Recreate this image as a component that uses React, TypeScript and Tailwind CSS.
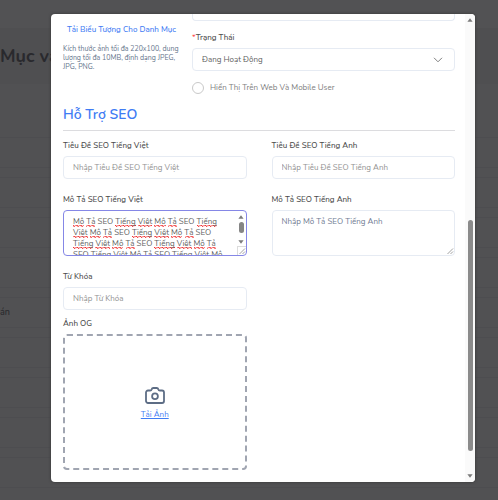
import { ReactNode, useId } from "react";

const SEO_TEXT = Array(7).fill("Mô Tả SEO Tiếng Việt").join(" ") + " Mô";

const fieldBox =
  "block w-full rounded-[4px] border border-[#e6ebf3] bg-white px-[9px] text-[8px] leading-[11px] text-[#5f5f5f] outline-none";

const squiggle =
  "bg-[linear-gradient(45deg,transparent_65%,#f02020_80%,transparent_90%),linear-gradient(135deg,transparent_5%,#f02020_15%,transparent_25%),linear-gradient(135deg,transparent_45%,#f02020_55%,transparent_65%),linear-gradient(45deg,transparent_25%,#f02020_35%,transparent_50%)] bg-[length:4px_2px] bg-bottom bg-repeat-x";

function Label({ htmlFor, children }: { htmlFor?: string; children: ReactNode }) {
  return (
    <label htmlFor={htmlFor} className="block text-[8px] leading-[12px] font-medium text-[#4c4c4c]">
      {children}
    </label>
  );
}

function TextField({ label, placeholder }: { label: string; placeholder: string }) {
  const id = useId();
  return (
    <div>
      <Label htmlFor={id}>{label}</Label>
      <input id={id} placeholder={placeholder} className={`${fieldBox} mt-1 h-[23px] placeholder:text-[#929292]`} />
    </div>
  );
}

function Grip() {
  return (
    <svg viewBox="0 0 8 8" className="size-2" stroke="#8a8a8a" strokeWidth="0.8" aria-hidden="true">
      <path d="M1.5 7 7 1.5M4.5 7 7 4.5" />
    </svg>
  );
}

function Arrow({ down = false }: { down?: boolean }) {
  return (
    <svg viewBox="0 0 6 4" className={down ? "h-1 w-1.5 rotate-180" : "h-1 w-1.5"} fill="#7b7b7b" aria-hidden="true">
      <path d="M3 0.3 5.6 3.7H.4z" />
    </svg>
  );
}

function MarkedText({ text }: { text: string }) {
  return (
    <>
      {text.split(" ").map((word, i) => (
        <span key={i}>
          <span className={word === "SEO" ? "" : squiggle}>{word}</span>{" "}
        </span>
      ))}
    </>
  );
}

function Backdrop() {
  return (
    <div className="absolute inset-0 overflow-hidden bg-[#515153]" aria-hidden="true">
      <div className="h-7 bg-[#525254]" />
      <div className="flex h-14 items-center bg-[#4f4f51] text-[18px] font-bold whitespace-nowrap text-[#29292d]">Mục và</div>
      <div className="mt-[53px] flex flex-col gap-[9px]">
        {["", "", "", "", "án", "", "", "", ""].map((text, row) => (
          <div key={row} className="flex h-[31px] items-center border-y border-[#4d4d50] text-[9px] font-medium text-[#29292d]">
            {text}
          </div>
        ))}
      </div>
    </div>
  );
}

export default function App() {
  return (
    <div className="relative h-screen overflow-hidden font-['Nunito','Lato','Noto_Sans',sans-serif]">
      <Backdrop />
      <main className="relative flex h-full w-full pt-[14px] pr-[23px] pb-[18px] pl-[51px]">
        <section role="dialog" aria-label="Danh Mục" className="flex w-full overflow-hidden rounded-[4px] bg-white shadow-[0_0_3px_#333]">
          <form className="min-w-0 flex-1 pr-[10px] pl-3">
            <div className="flex gap-3">
              <div className="w-[117px] shrink-0 pt-[9px]">
                <button type="button" className="block w-full text-center text-[8px] leading-[14px] font-medium whitespace-nowrap text-[#3f7cf4]">
                  Tải Biểu Tượng Cho Danh Mục
                </button>
                <p className="mt-[7px] text-[7px] leading-[9px] text-[#64748b]">
                  Kích thước ảnh tối đa 220x100, dung lượng tối đa 10MB, định dạng JPEG, JPG, PNG.
                </p>
              </div>
              <div className="min-w-0 flex-1">
                <input aria-label="Tên" className="block h-[7px] w-full rounded-b-[4px] border border-t-0 border-[#e6ebf3]" />
                <div className="mt-[11px]">
                  <Label htmlFor="status">
                    <span className="text-[#ff3b3b]">*</span>Trạng Thái
                  </Label>
                </div>
                <div className="relative mt-1">
                  <select id="status" className={`${fieldBox} h-[23px] appearance-none`}>
                    <option>Đang Hoạt Động</option>
                  </select>
                  <svg viewBox="0 0 10 6" className="pointer-events-none absolute top-[9px] right-3 h-1.5 w-[10px]" fill="none" stroke="#7f7f7f" aria-hidden="true">
                    <path d="M1 .8 5 4.8 9 .8" />
                  </svg>
                </div>
                <label className="mt-[11px] flex items-center gap-[6px] text-[8px] leading-[12px] text-[#808080]">
                  <input type="checkbox" className="size-3 appearance-none rounded-full border border-[#c9c9c9]" />
                  Hiển Thị Trên Web Và Mobile User
                </label>
              </div>
            </div>

            <h2 className="mt-[11px] border-b border-[#dcdcdf] pb-[5px] text-[14px] leading-[20px] font-semibold text-[#3f7cf4]">Hỗ Trợ SEO</h2>

            <div className="mt-[9px] grid grid-cols-2 gap-x-[25px] gap-y-[15px]">
              <TextField label="Tiêu Đề SEO Tiếng Việt" placeholder="Nhập Tiêu Đề SEO Tiếng Việt" />
              <TextField label="Tiêu Đề SEO Tiếng Anh" placeholder="Nhập Tiêu Đề SEO Tiếng Anh" />
              <div>
                <Label htmlFor="desc-vi">Mô Tả SEO Tiếng Việt</Label>
                <div className="relative mt-1 h-[46px] overflow-hidden rounded-[4px] border border-[#8587e6] bg-white">
                  <div className="absolute inset-0 overflow-hidden py-[5px] pr-5 pl-[9px] text-[8px] leading-[11px] text-transparent" aria-hidden="true">
                    <MarkedText text={SEO_TEXT} />
                  </div>
                  <textarea
                    id="desc-vi"
                    spellCheck={false}
                    defaultValue={SEO_TEXT}
                    className="relative block h-full w-full resize-none overflow-hidden bg-transparent py-[5px] pr-5 pl-[9px] text-[8px] leading-[11px] text-[#5f5f5f] outline-none"
                  />
                  <div className="absolute top-0 right-0 flex h-full w-[9px] flex-col items-center pt-1">
                    <Arrow />
                    <div className="mt-[3px] h-[11px] w-[5px] rounded-full bg-[#858585]" />
                    <div className="mt-[7px] flex">
                      <Arrow down />
                    </div>
                    <div className="mt-auto border-t border-l border-[#dcdcdc]">
                      <Grip />
                    </div>
                  </div>
                </div>
              </div>
              <div>
                <Label htmlFor="desc-en">Mô Tả SEO Tiếng Anh</Label>
                <div className="relative mt-1">
                  <textarea id="desc-en" placeholder="Nhập Mô Tả SEO Tiếng Anh" className={`${fieldBox} h-[46px] resize-none py-[5px] placeholder:text-[#6f7b92]`} />
                  <div className="absolute right-px bottom-px">
                    <Grip />
                  </div>
                </div>
              </div>
              <TextField label="Từ Khóa" placeholder="Nhập Từ Khóa" />
            </div>

            <div className="mt-2 grid grid-cols-2 gap-x-[25px]">
              <div>
                <Label>Ảnh OG</Label>
                <div className="mt-1 flex h-[136px] flex-col items-center justify-center rounded-[4px] border-2 border-dashed border-[#a0a5b1] pt-1">
                  <svg viewBox="0 0 20 17" className="h-[17px] w-5" fill="none" stroke="#5d6d85" strokeWidth="1.8" strokeLinejoin="round" aria-hidden="true">
                    <path d="M3 3.5h2.2c.8 0 1.3-.5 1.5-1.2.2-.8.8-1.3 1.6-1.3h3.4c.8 0 1.4.5 1.6 1.3.2.7.7 1.2 1.5 1.2H17a2 2 0 0 1 2 2V14a2 2 0 0 1-2 2H3a2 2 0 0 1-2-2V5.5a2 2 0 0 1 2-2z" />
                    <circle cx="10" cy="9.3" r="2.9" />
                  </svg>
                  <button type="button" className="mt-[5px] text-[8px] leading-[12px] text-[#3f7cf4] underline">Tải Ảnh</button>
                </div>
              </div>
            </div>
          </form>
          <div className="flex w-[10px] shrink-0 flex-col items-center bg-[#fafafa] pt-1 pb-1" aria-hidden="true">
            <Arrow />
            <div className="mt-auto mb-[23px] h-[231px] w-[5px] rounded-full bg-[#8b8b8b]" />
            <Arrow down />
          </div>
        </section>
      </main>
    </div>
  );
}
